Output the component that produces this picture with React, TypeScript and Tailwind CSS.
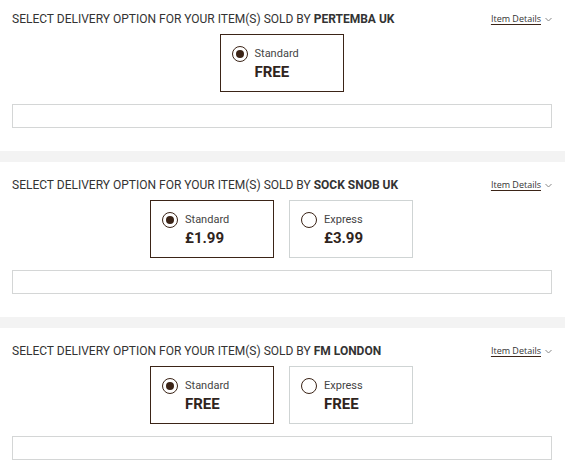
import type { FunctionComponent } from "react";

type Option = { label: string; price: string; selected?: boolean };

type SellerProps = {
  seller: string;
  options: Option[];
  first?: boolean;
};

const Radio: FunctionComponent<{ on?: boolean }> = ({ on }) => (
  <div className="mt-[1px] flex h-[16px] w-[16px] shrink-0 items-center justify-center rounded-full border-[1.5px] border-[#3b2417] bg-white">
    {on && <div className="h-[8px] w-[8px] rounded-full bg-[#3b2417]" />}
  </div>
);

const Seller: FunctionComponent<SellerProps> = ({ seller, options, first }) => (
  <div className={`flex flex-col px-3 pb-[23px] ${first ? "pt-[12px]" : "pt-[16px]"}`}>
    <div className="flex h-[14px] items-center justify-between">
      <p className="font-['Roboto',sans-serif] text-[12px] leading-[14px] text-[#333]">
        SELECT DELIVERY OPTION FOR YOUR ITEM(S) SOLD BY{" "}
        <span className="font-bold">{seller}</span>
      </p>
      <div className="flex items-center gap-[4px] pr-[1px]">
        <span className="font-['Open_Sans',sans-serif] text-[9px] leading-[12px] text-[#333] underline decoration-[#3b2417] underline-offset-2">
          Item Details
        </span>
        <svg width="7" height="5" viewBox="0 0 7 5" fill="none">
          <path d="M0.5 1 L3.5 4 L6.5 1" stroke="#888" strokeWidth="1" />
        </svg>
      </div>
    </div>
    <div className="mt-[8px] flex justify-center gap-[15px] pr-[2px]">
      {options.map((o) => (
        <div
          key={o.label}
          className={`flex h-[58px] w-[124px] gap-[7px] border px-[11px] pt-[10px] ${
            o.selected ? "border-[#3b2417]" : "border-[#cfd4d4]"
          }`}
        >
          <Radio on={o.selected} />
          <div className="flex flex-col font-['Roboto',sans-serif]">
            <span className="mt-[1px] text-[11px] leading-[16px] text-[#444]">{o.label}</span>
            <span className="mt-[1px] text-[15px] font-bold leading-[18px] text-[#2f241d]">{o.price}</span>
          </div>
        </div>
      ))}
    </div>
    <div className="mt-[12px] h-[24px] w-[540px] border border-[#d4d6d6] bg-white" />
  </div>
);

export default function App() {
  return (
    <div className="flex min-h-[468px] w-[565px] flex-col overflow-hidden bg-white">
      <Seller first seller="PERTEMBA UK" options={[{ label: "Standard", price: "FREE", selected: true }]} />
      <div className="h-[11px] bg-[#f3f3f3]" />
      <Seller
        seller="SOCK SNOB UK"
        options={[
          { label: "Standard", price: "£1.99", selected: true },
          { label: "Express", price: "£3.99" },
        ]}
      />
      <div className="h-[11px] bg-[#f3f3f3]" />
      <Seller
        seller="FM LONDON"
        options={[
          { label: "Standard", price: "FREE", selected: true },
          { label: "Express", price: "FREE" },
        ]}
      />
    </div>
  );
}
